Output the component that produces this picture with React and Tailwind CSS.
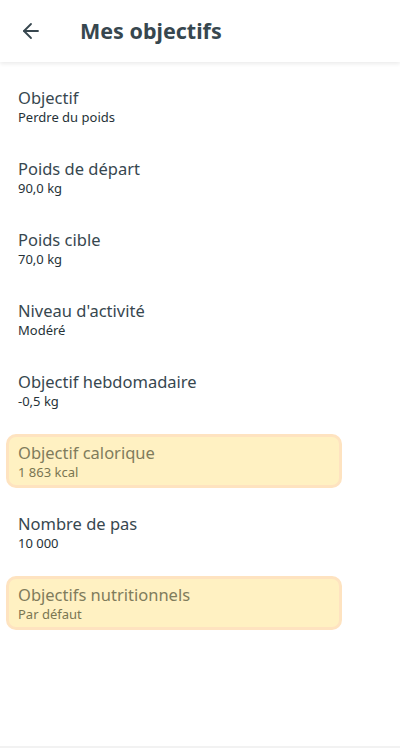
import { ArrowLeft } from 'lucide-react';

const rows = [
  { title: 'Objectif', value: 'Perdre du poids' },
  { title: 'Poids de départ', value: '90,0 kg' },
  { title: 'Poids cible', value: '70,0 kg' },
  { title: "Niveau d'activité", value: 'Modéré' },
  { title: 'Objectif hebdomadaire', value: '-0,5 kg' },
  { title: 'Objectif calorique', value: '1 863 kcal', highlight: true },
  { title: 'Nombre de pas', value: '10 000' },
  { title: 'Objectifs nutritionnels', value: 'Par défaut', highlight: true },
];

function Row({ title, value, highlight }) {
  return (
    <div className="h-[71px] pl-[6px] pr-[58px] py-[8.5px]">
      <div
        className={`h-[54px] rounded-[10px] border-[3px] pl-[9px] pt-[1px] flex flex-col justify-center ${
          highlight ? 'border-[#fee3c0] bg-[#fff1c2]' : 'border-transparent'
        }`}
      >
        <div className={`text-[16.5px] leading-[22px] ${highlight ? 'text-[#7f7c5c]' : 'text-[#37474f]'}`}>{title}</div>
        <div className={`text-[13px] leading-[17px] ${highlight ? 'text-[#7a7652]' : 'text-[#263238]'}`}>{value}</div>
      </div>
    </div>
  );
}

export default function App() {
  return (
    <div className="h-[748px] bg-white flex flex-col" style={{ fontFamily: '"Noto Sans", Roboto, sans-serif' }}>
      <header className="h-[62px] shrink-0 flex items-center bg-white shadow-[0_2px_4px_rgba(0,0,0,0.08)] z-10">
        <ArrowLeft className="ml-[19px] w-[24px] h-[24px] text-[#37474f]" strokeWidth={1.8} />
        <h1 className="ml-[37px] text-[21.5px] font-bold text-[#37474f]">Mes objectifs</h1>
      </header>
      <main className="flex-1 pt-[8px]">
        {rows.map((r) => (
          <Row key={r.title} {...r} />
        ))}
      </main>
      <div className="h-[2px] bg-[#f2f2f2]" />
    </div>
  );
}
